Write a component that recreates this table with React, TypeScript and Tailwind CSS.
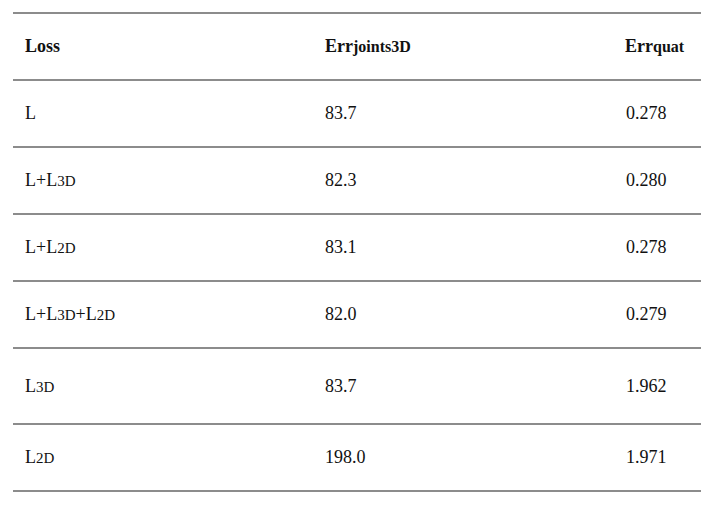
const rows: { loss: [string, string?][]; joints: string; quat: string; tall?: boolean }[] = [
  { loss: [['L']], joints: '83.7', quat: '0.278' },
  { loss: [['L+L'], ['3D', 's']], joints: '82.3', quat: '0.280' },
  { loss: [['L+L'], ['2D', 's']], joints: '83.1', quat: '0.278' },
  { loss: [['L+L'], ['3D', 's'], ['+L'], ['2D', 's']], joints: '82.0', quat: '0.279' },
  { loss: [['L'], ['3D', 's']], joints: '83.7', quat: '1.962', tall: true },
  { loss: [['L'], ['2D', 's']], joints: '198.0', quat: '1.971' },
];

function Label({ parts }: { parts: [string, string?][] }) {
  return (
    <span>
      {parts.map(([t, s], i) =>
        s ? <span key={i} className="text-[15px]">{t}</span> : <span key={i}>{t}</span>
      )}
    </span>
  );
}

export default function App() {
  return (
    <div className="w-[701px] h-[508px] bg-white pt-[12px] pl-[13px] text-[18px] text-[#111] font-['Liberation_Serif',serif]">
      <div className="border-t-2 border-[#8c8c8c]">
        {/* Header */}
        <div className="grid grid-cols-[300px_300px_1fr] items-center h-[67px] pl-[12px] border-b-2 border-[#8c8c8c] font-bold">
          <span>Loss</span>
          <span>Err<span className="text-[16px]">joints3D</span></span>
          <span>Err<span className="text-[16px]">quat</span></span>
        </div>
        {rows.map((r, i) => (
          <div
            key={i}
            className={`grid grid-cols-[300px_300px_1fr] items-center pl-[12px] border-b-2 border-[#8c8c8c] ${r.tall ? 'h-[76px]' : 'h-[67px]'}`}
          >
            <Label parts={r.loss} />
            <span>{r.joints}</span>
            <span className="pl-px">{r.quat}</span>
          </div>
        ))}
      </div>
    </div>
  );
}
